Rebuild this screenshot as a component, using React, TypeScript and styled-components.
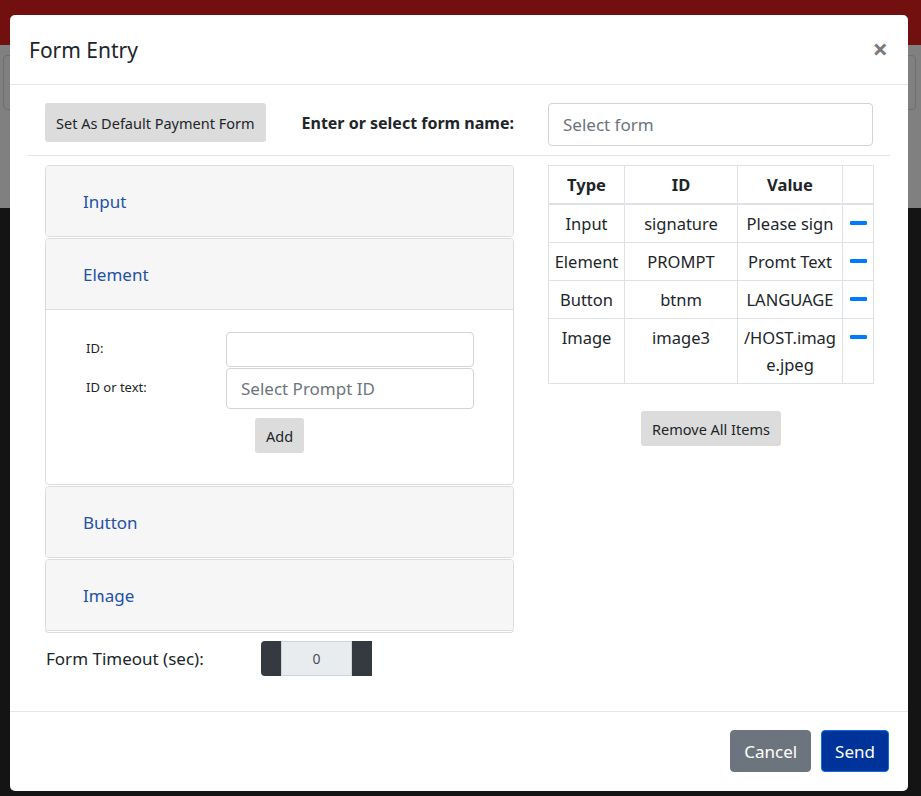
import React from "react";
import styled, { createGlobalStyle } from "styled-components";

const GlobalStyle = createGlobalStyle`
  html, body {
    margin: 0;
    padding: 0;
    height: 100%;
    overflow: hidden;
  }
  body {
    font-family: "Noto Sans", "Open Sans", Arial, sans-serif;
    color: #212529;
    background: #141414;
  }
`;

const Page = styled.div`
  position: relative;
  width: 921px;
  height: 796px;
  overflow: hidden;
  display: flex;
  flex-direction: column;
`;

const TopBar = styled.div`
  height: 45px;
  background: #720f0f;
`;

const GrayBand = styled.div`
  height: 163px;
  background: #808080;
  padding: 10px 5px 0 3px;
  box-sizing: border-box;
`;

const GhostInput = styled.div`
  height: 53px;
  border: 1px solid #6f6f6f;
  border-radius: 4px;
`;

const DarkArea = styled.div`
  flex: 1;
  background: #141414;
`;

const Modal = styled.div`
  position: absolute;
  top: 15px;
  left: 10px;
  width: 898px;
  background: #fff;
  border-radius: 5px;
  display: flex;
  flex-direction: column;
`;

const Header = styled.div`
  height: 70px;
  box-sizing: border-box;
  padding: 0 20px 0 19px;
  border-bottom: 1px solid #e6e6e6;
  display: flex;
  align-items: center;
  justify-content: space-between;
`;

const Title = styled.h5`
  margin: 0;
  font-size: 21px;
  font-weight: 400;
  color: #212529;
`;

const Close = styled.span`
  font-size: 27px;
  font-weight: 700;
  color: #7a7a7a;
  line-height: 1;
  margin-top: -3px;
`;

const Body = styled.div`
  padding: 18px 18px 35px;
`;

const Row = styled.div`
  display: grid;
  grid-template-columns: 469px 1fr;
  column-gap: 34px;
  padding: 0 17px;
  align-items: start;
`;

const TopLeft = styled.div`
  display: flex;
  align-items: center;
  justify-content: space-between;
  height: 39px;
`;

const GreyButton = styled.button<{ $h?: number }>`
  height: ${({ $h }) => $h ?? 35}px;
  padding: 0 11px;
  background: #dcdcdc;
  border: none;
  border-radius: 3px;
  font-family: inherit;
  font-size: 14.5px;
  color: #212529;
  cursor: pointer;
`;

const FormNameLabel = styled.label`
  font-size: 16px;
  font-weight: 700;
  color: #212529;
`;

const TextInput = styled.input<{ $h: number }>`
  width: 100%;
  box-sizing: border-box;
  height: ${({ $h }) => $h}px;
  border: 1px solid #ced4da;
  border-radius: 4px;
  padding: 0 14px;
  font-family: inherit;
  font-size: 17px;
  color: #495057;
  &::placeholder {
    color: #6c757d;
  }
`;

const Divider = styled.hr`
  margin: 9px 0 9px;
  border: 0;
  border-top: 1px solid #e3e3e3;
`;

const Accordion = styled.div`
  display: flex;
  flex-direction: column;
  gap: 1px;
`;

const Card = styled.div`
  border: 1px solid #dcdcdc;
  border-radius: 4px;
  overflow: hidden;
  &:last-child {
    box-shadow: 0 2px 0 -1px #fff, 0 2px 0 0 #dcdcdc;
  }
`;

const CardHeader = styled.div<{ $open?: boolean }>`
  height: 70px;
  background: #f6f6f6;
  display: flex;
  align-items: center;
  padding-left: 37px;
  font-size: 17px;
  color: #2352a6;
  border-bottom: ${({ $open }) => ($open ? "1px solid #dcdcdc" : "none")};
`;

const CardBody = styled.div`
  padding: 22px 39px 31px 40px;
`;

const FieldGrid = styled.div`
  display: grid;
  grid-template-columns: 140px 248px;
  row-gap: 1px;
  align-items: center;
`;

const SmallLabel = styled.label`
  font-size: 13px;
  color: #212529;
  margin-top: -4px;
`;

const AddRow = styled.div`
  padding: 9px 0 0 169px;
`;

const TimeoutRow = styled.div`
  display: flex;
  align-items: center;
  margin-top: 10px;
`;

const TimeoutLabel = styled.span`
  width: 215px;
  font-size: 17px;
  color: #212529;
  padding-left: 1px;
`;

const Spinner = styled.div`
  display: flex;
  height: 35px;
`;

const SpinBtn = styled.button<{ $side: "l" | "r" }>`
  width: 20px;
  border: none;
  background: #343a40;
  border-radius: ${({ $side }) => ($side === "l" ? "4px 0 0 4px" : "0")};
`;

const SpinValue = styled.div`
  width: 69px;
  background: #e9ecef;
  border: 1px solid #ced4da;
  display: flex;
  align-items: center;
  justify-content: center;
  font-size: 14px;
  color: #495057;
`;

const RightCol = styled.div`
  display: flex;
  flex-direction: column;
  align-items: center;
`;

const Table = styled.table`
  width: 100%;
  border-collapse: collapse;
  font-size: 16.5px;
  color: #212529;
  table-layout: fixed;
`;

const Th = styled.th`
  border: 1px solid #dee2e6;
  border-bottom-width: 2px;
  height: 37px;
  padding: 0 4px;
  font-weight: 700;
  text-align: center;
`;

const Td = styled.td`
  border: 1px solid #dee2e6;
  padding: 5px 4px;
  line-height: 27px;
  text-align: center;
  vertical-align: top;
  word-break: break-all;
`;

const Minus = styled.span`
  display: inline-block;
  width: 17px;
  height: 4px;
  background: #007bff;
  border-radius: 1px;
  vertical-align: middle;
  margin-top: -6px;
`;

const RemoveWrap = styled.div`
  margin-top: 27px;
`;

const Footer = styled.div`
  border-top: 1px solid #e6e6e6;
  padding: 18px 19px 19px;
  display: flex;
  justify-content: flex-end;
  gap: 10px;
`;

const FooterButton = styled.button<{ $primary?: boolean }>`
  height: 42px;
  padding: 0 13px;
  border-radius: 4px;
  font-family: inherit;
  font-size: 17px;
  color: #fff;
  background: ${({ $primary }) => ($primary ? "#003399" : "#6c757d")};
  border: 1px solid ${({ $primary }) => ($primary ? "#0a6fe0" : "#6c757d")};
`;

const items = [
  { type: "Input", id: "signature", value: "Please sign" },
  { type: "Element", id: "PROMPT", value: "Promt Text" },
  { type: "Button", id: "btnm", value: "LANGUAGE" },
  { type: "Image", id: "image3", value: "/HOST.image.jpeg" },
];

const colWidths = [76, 113, 105, 31];

export default function App() {
  return (
    <>
      <GlobalStyle />
      <Page>
        <TopBar />
        <GrayBand>
          <GhostInput />
        </GrayBand>
        <DarkArea />
        <Modal>
          <Header>
            <Title>Form Entry</Title>
            <Close>×</Close>
          </Header>
          <Body>
            <Row>
              <TopLeft>
                <GreyButton $h={39}>Set As Default Payment Form</GreyButton>
                <FormNameLabel>Enter or select form name:</FormNameLabel>
              </TopLeft>
              <TextInput $h={43} placeholder="Select form" />
            </Row>
            <Divider />
            <Row>
              <div>
                <Accordion>
                  <Card>
                    <CardHeader>Input</CardHeader>
                  </Card>
                  <Card>
                    <CardHeader $open>Element</CardHeader>
                    <CardBody>
                      <FieldGrid>
                        <SmallLabel>ID:</SmallLabel>
                        <TextInput $h={35} />
                        <SmallLabel>ID or text:</SmallLabel>
                        <TextInput $h={41} placeholder="Select Prompt ID" />
                      </FieldGrid>
                      <AddRow>
                        <GreyButton>Add</GreyButton>
                      </AddRow>
                    </CardBody>
                  </Card>
                  <Card>
                    <CardHeader>Button</CardHeader>
                  </Card>
                  <Card>
                    <CardHeader>Image</CardHeader>
                  </Card>
                </Accordion>
                <TimeoutRow>
                  <TimeoutLabel>Form Timeout (sec):</TimeoutLabel>
                  <Spinner>
                    <SpinBtn $side="l" />
                    <SpinValue>0</SpinValue>
                    <SpinBtn $side="r" />
                  </Spinner>
                </TimeoutRow>
              </div>
              <RightCol>
                <Table>
                  <colgroup>
                    {colWidths.map((w, i) => (
                      <col key={i} style={{ width: w }} />
                    ))}
                  </colgroup>
                  <thead>
                    <tr>
                      <Th>Type</Th>
                      <Th>ID</Th>
                      <Th>Value</Th>
                      <Th />
                    </tr>
                  </thead>
                  <tbody>
                    {items.map((it) => (
                      <tr key={it.id}>
                        <Td>{it.type}</Td>
                        <Td>{it.id}</Td>
                        <Td>{it.value}</Td>
                        <Td>
                          <Minus />
                        </Td>
                      </tr>
                    ))}
                  </tbody>
                </Table>
                <RemoveWrap>
                  <GreyButton>Remove All Items</GreyButton>
                </RemoveWrap>
              </RightCol>
            </Row>
          </Body>
          <Footer>
            <FooterButton>Cancel</FooterButton>
            <FooterButton $primary>Send</FooterButton>
          </Footer>
        </Modal>
      </Page>
    </>
  );
}
